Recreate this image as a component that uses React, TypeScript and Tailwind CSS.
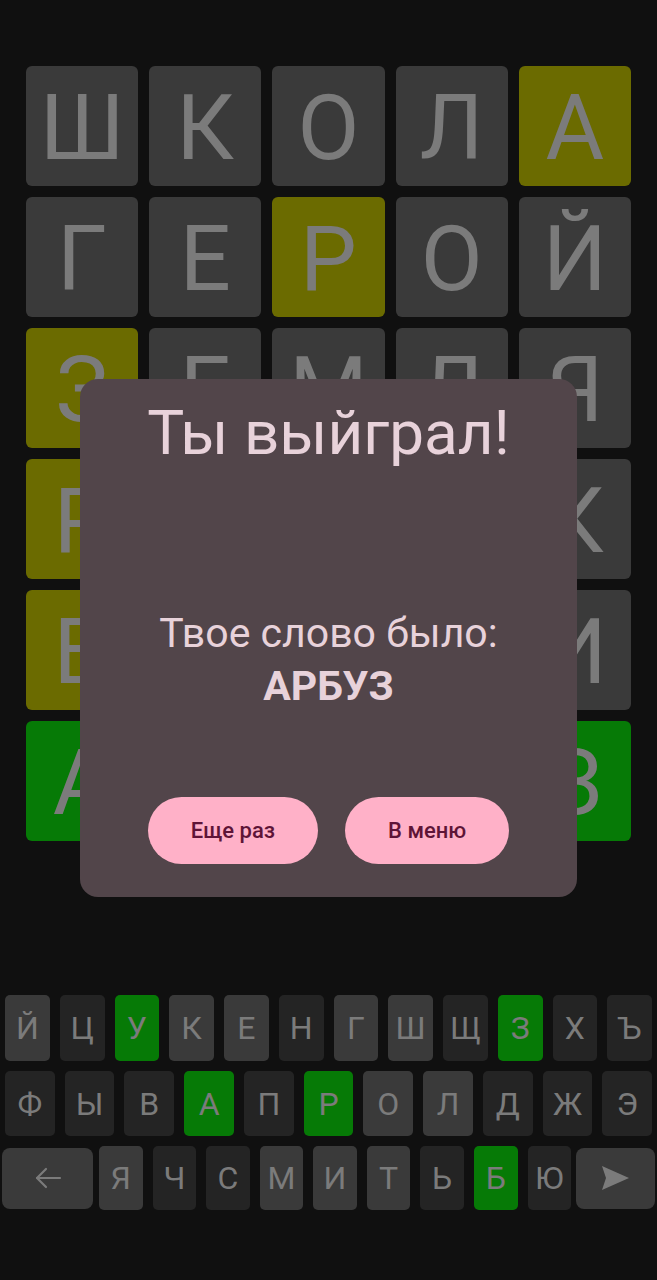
import React from 'react';

type Tone = 'gray' | 'yellow' | 'green';
type KeyTone = 'used' | 'idle' | 'hit';

// guesses on the board; hidden letters under the dialog are filler
const BOARD: { ch: string; tone: Tone }[][] = [
  [
    { ch: 'Ш', tone: 'gray' },
    { ch: 'К', tone: 'gray' },
    { ch: 'О', tone: 'gray' },
    { ch: 'Л', tone: 'gray' },
    { ch: 'А', tone: 'yellow' },
  ],
  [
    { ch: 'Г', tone: 'gray' },
    { ch: 'Е', tone: 'gray' },
    { ch: 'Р', tone: 'yellow' },
    { ch: 'О', tone: 'gray' },
    { ch: 'Й', tone: 'gray' },
  ],
  [
    { ch: 'З', tone: 'yellow' },
    { ch: 'Е', tone: 'gray' },
    { ch: 'М', tone: 'gray' },
    { ch: 'Л', tone: 'gray' },
    { ch: 'Я', tone: 'gray' },
  ],
  [
    { ch: 'Р', tone: 'yellow' },
    { ch: 'О', tone: 'gray' },
    { ch: 'Т', tone: 'gray' },
    { ch: 'И', tone: 'gray' },
    { ch: 'К', tone: 'gray' },
  ],
  [
    { ch: 'Б', tone: 'yellow' },
    { ch: 'Е', tone: 'gray' },
    { ch: 'Л', tone: 'gray' },
    { ch: 'К', tone: 'gray' },
    { ch: 'И', tone: 'gray' },
  ],
  [
    { ch: 'А', tone: 'green' },
    { ch: 'Р', tone: 'green' },
    { ch: 'Б', tone: 'green' },
    { ch: 'У', tone: 'green' },
    { ch: 'З', tone: 'green' },
  ],
];

const ROW1: [string, KeyTone][] = [
  ['Й', 'used'], ['Ц', 'idle'], ['У', 'hit'], ['К', 'used'], ['Е', 'used'], ['Н', 'idle'],
  ['Г', 'used'], ['Ш', 'used'], ['Щ', 'idle'], ['З', 'hit'], ['Х', 'idle'], ['Ъ', 'idle'],
];
const ROW2: [string, KeyTone][] = [
  ['Ф', 'idle'], ['Ы', 'idle'], ['В', 'idle'], ['А', 'hit'], ['П', 'idle'], ['Р', 'hit'],
  ['О', 'used'], ['Л', 'used'], ['Д', 'idle'], ['Ж', 'idle'], ['Э', 'idle'],
];
const ROW3: [string, KeyTone][] = [
  ['Я', 'used'], ['Ч', 'idle'], ['С', 'idle'], ['М', 'used'], ['И', 'used'],
  ['Т', 'used'], ['Ь', 'idle'], ['Б', 'hit'], ['Ю', 'idle'],
];

function tileBg(tone: Tone) {
  switch (tone) {
    case 'yellow': return 'bg-[#6b6b00]';
    case 'green': return 'bg-[#067a06]';
    default: return 'bg-[#3a3a3a]';
  }
}

function keyBg(tone: KeyTone) {
  switch (tone) {
    case 'hit': return 'bg-[#067a06]';
    case 'used': return 'bg-[#3a3a3a]';
    default: return 'bg-[#242424]';
  }
}

function Key({ ch, tone, className = '' }: { ch: string; tone: KeyTone; className?: string }) {
  return (
    <div className={`${keyBg(tone)} ${className} h-full rounded-[5px] flex items-center justify-center text-[32px] text-[#7b7b7b]`}>
      {ch}
    </div>
  );
}

export default function App() {
  return (
    <div
      className="relative w-[657px] h-[1280px] bg-[#101010] overflow-hidden flex flex-col"
      style={{ fontFamily: 'Roboto, "Noto Sans", sans-serif' }}
    >
      {/* board */}
      <div className="mt-[66px] px-[26px] grid grid-cols-5 gap-[11px]">
        {BOARD.flat().map((t, i) => (
          <div
            key={i}
            className={`${tileBg(t.tone)} h-[120px] rounded-[6px] flex items-center justify-center text-[90px] leading-none text-[#7b7b7b]`}
          >
            <span className="translate-y-[3px]">{t.ch}</span>
          </div>
        ))}
      </div>

      {/* keyboard */}
      <div className="mt-[154px] flex flex-col gap-[10px]">
        <div className="h-[66px] px-[5px] flex gap-[10px]">
          {ROW1.map(([ch, tone]) => <Key key={ch} ch={ch} tone={tone} className="flex-1" />)}
        </div>
        <div className="h-[65px] px-[5px] flex gap-[10px]">
          {ROW2.map(([ch, tone]) => <Key key={ch} ch={ch} tone={tone} className="flex-1" />)}
        </div>
        <div className="h-[64px] pl-[2px] pr-[2px] flex items-center">
          <div className="w-[91px] h-[61px] rounded-[8px] bg-[#3a3a3a] flex items-center justify-center">
            <svg width="28" height="22" viewBox="0 0 28 22" fill="none" stroke="#7b7b7b" strokeWidth="2.2" strokeLinecap="round" strokeLinejoin="round">
              <path d="M26 11H3" />
              <path d="M12 2L3 11l9 9" />
            </svg>
          </div>
          <div className="mx-[5px] ml-[6px] flex-1 h-full flex gap-[10px]">
            {ROW3.map(([ch, tone]) => <Key key={ch} ch={ch} tone={tone} className="flex-1" />)}
          </div>
          <div className="w-[79px] h-[61px] rounded-[8px] bg-[#3a3a3a] flex items-center justify-center">
            <svg width="27" height="24" viewBox="0 0 27 24" fill="#7b7b7b">
              <path d="M0 0L27 12L0 24L4 12Z" />
            </svg>
          </div>
        </div>
      </div>

      {/* result dialog */}
      <div className="absolute left-[80px] top-[379px] w-[497px] h-[518px] rounded-[18px] bg-[#52454a] flex flex-col items-center pt-[18px] text-[#e8d2da]">
        <div className="text-[62px] leading-[72px]">Ты выйграл!</div>
        <div className="mt-[138px] text-[41px] leading-[53px] text-center">
          <div>Твое слово было:</div>
          <div className="font-bold">АРБУЗ</div>
        </div>
        <div className="mt-[84px] flex gap-[27px]">
          <button className="h-[67px] px-[43px] rounded-full bg-[#ffb1c8] text-[#5e1437] text-[22px] font-medium">
            Еще раз
          </button>
          <button className="h-[67px] px-[43px] rounded-full bg-[#ffb1c8] text-[#5e1437] text-[22px] font-medium">
            В меню
          </button>
        </div>
      </div>
    </div>
  );
}
